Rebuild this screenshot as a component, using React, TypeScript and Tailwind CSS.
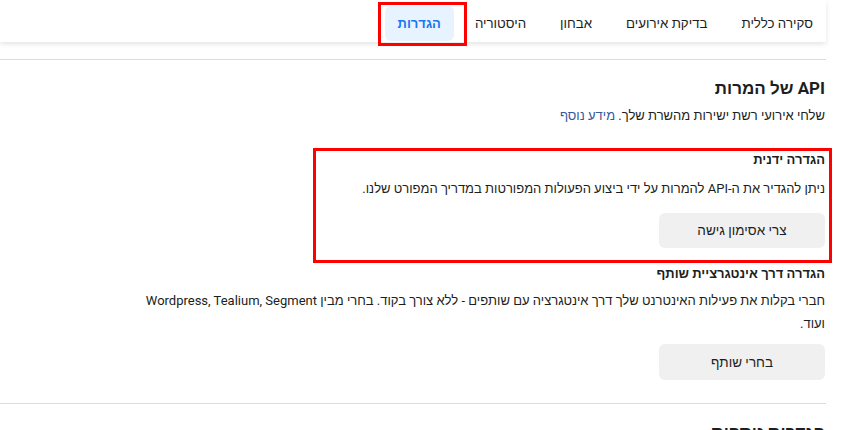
import React from "react";

const tabs = ["סקירה כללית", "בדיקת אירועים", "אבחון", "היסטוריה", "הגדרות"];

export default function App() {
    return (
        <div
            dir="rtl"
            className="w-[841px] h-[430px] overflow-hidden bg-white text-[#1c1e21]"
            style={{ fontFamily: 'Roboto, "Liberation Sans", Arial, sans-serif' }}
        >
            <div className="w-[826px] mr-auto">
                {/* top tabs */}
                <div className="h-[42px] bg-white shadow-[0_2px_5px_rgba(0,0,0,0.11)] flex items-start pt-[6px] gap-[8px]">
                    {tabs.map((t, i) => {
                        const active = i === tabs.length - 1;
                        return (
                            <div
                                key={t}
                                className={
                                    active
                                        ? "relative h-[35px] px-[13px] flex items-center rounded-md bg-[#e7f3ff] text-[#1877f2] font-bold text-[13px]"
                                        : "h-[35px] px-[13px] flex items-center text-[13.3px] text-[#1c1e21]"
                                }
                            >
                                {t}
                                {active && (
                                    <div className="absolute top-[-4px] bottom-[-5px] left-[-7px] right-[-13px] border-[3px] border-[#ff0000]" />
                                )}
                            </div>
                        );
                    })}
                </div>

                <div className="mt-[17px] border-t border-[#dadde1]" />

                <div className="pt-[17px] pr-px">
                    <h1 className="text-[17px] font-bold leading-[22px]">API של המרות</h1>
                    <p className="mt-[7px] text-[13px] leading-[20px]">
                        שלחי אירועי רשת ישירות מהשרת שלך.{" "}
                        <span className="text-[#385898]">מידע נוסף</span>
                    </p>

                    <div className="relative mt-[25px]">
                        <h2 className="text-[13px] font-bold leading-[18px]">הגדרה ידנית</h2>
                        <p className="mt-[10px] text-[13px] leading-[20px]">
                            ניתן להגדיר את ה-API להמרות על ידי ביצוע הפעולות המפורטות במדריך המפורט שלנו.
                        </p>
                        <button className="mt-[14px] w-[166px] h-[35px] rounded-md bg-[#f0f0f0] text-[13.5px] text-[#1c1e21]">
                            צרי אסימון גישה
                        </button>
                        <div className="absolute top-[-3px] bottom-[-15px] right-[-7px] left-[313px] border-[3px] border-[#ff0000]" />
                    </div>

                    <h2 className="mt-[17px] text-[13px] font-bold leading-[18px]">הגדרה דרך אינטגרציית שותף</h2>
                    <p className="mt-[6px] w-[696px] text-[13px] leading-[23px]">
                        חברי בקלות את פעילות האינטרנט שלך דרך אינטגרציה עם שותפים - ללא צורך בקוד. בחרי מבין Wordpress, Tealium, Segment ועוד.
                    </p>
                    <button className="mt-[9px] w-[166px] h-[36px] rounded-md bg-[#f0f0f0] text-[13.5px] text-[#1c1e21]">
                        בחרי שותף
                    </button>
                </div>

                <div className="mt-[23px] border-t border-[#dadde1]" />

                <h1 className="pr-px mt-[17px] text-[17px] font-bold leading-[22px]">הגדרות נוספות</h1>
            </div>
        </div>
    );
}
